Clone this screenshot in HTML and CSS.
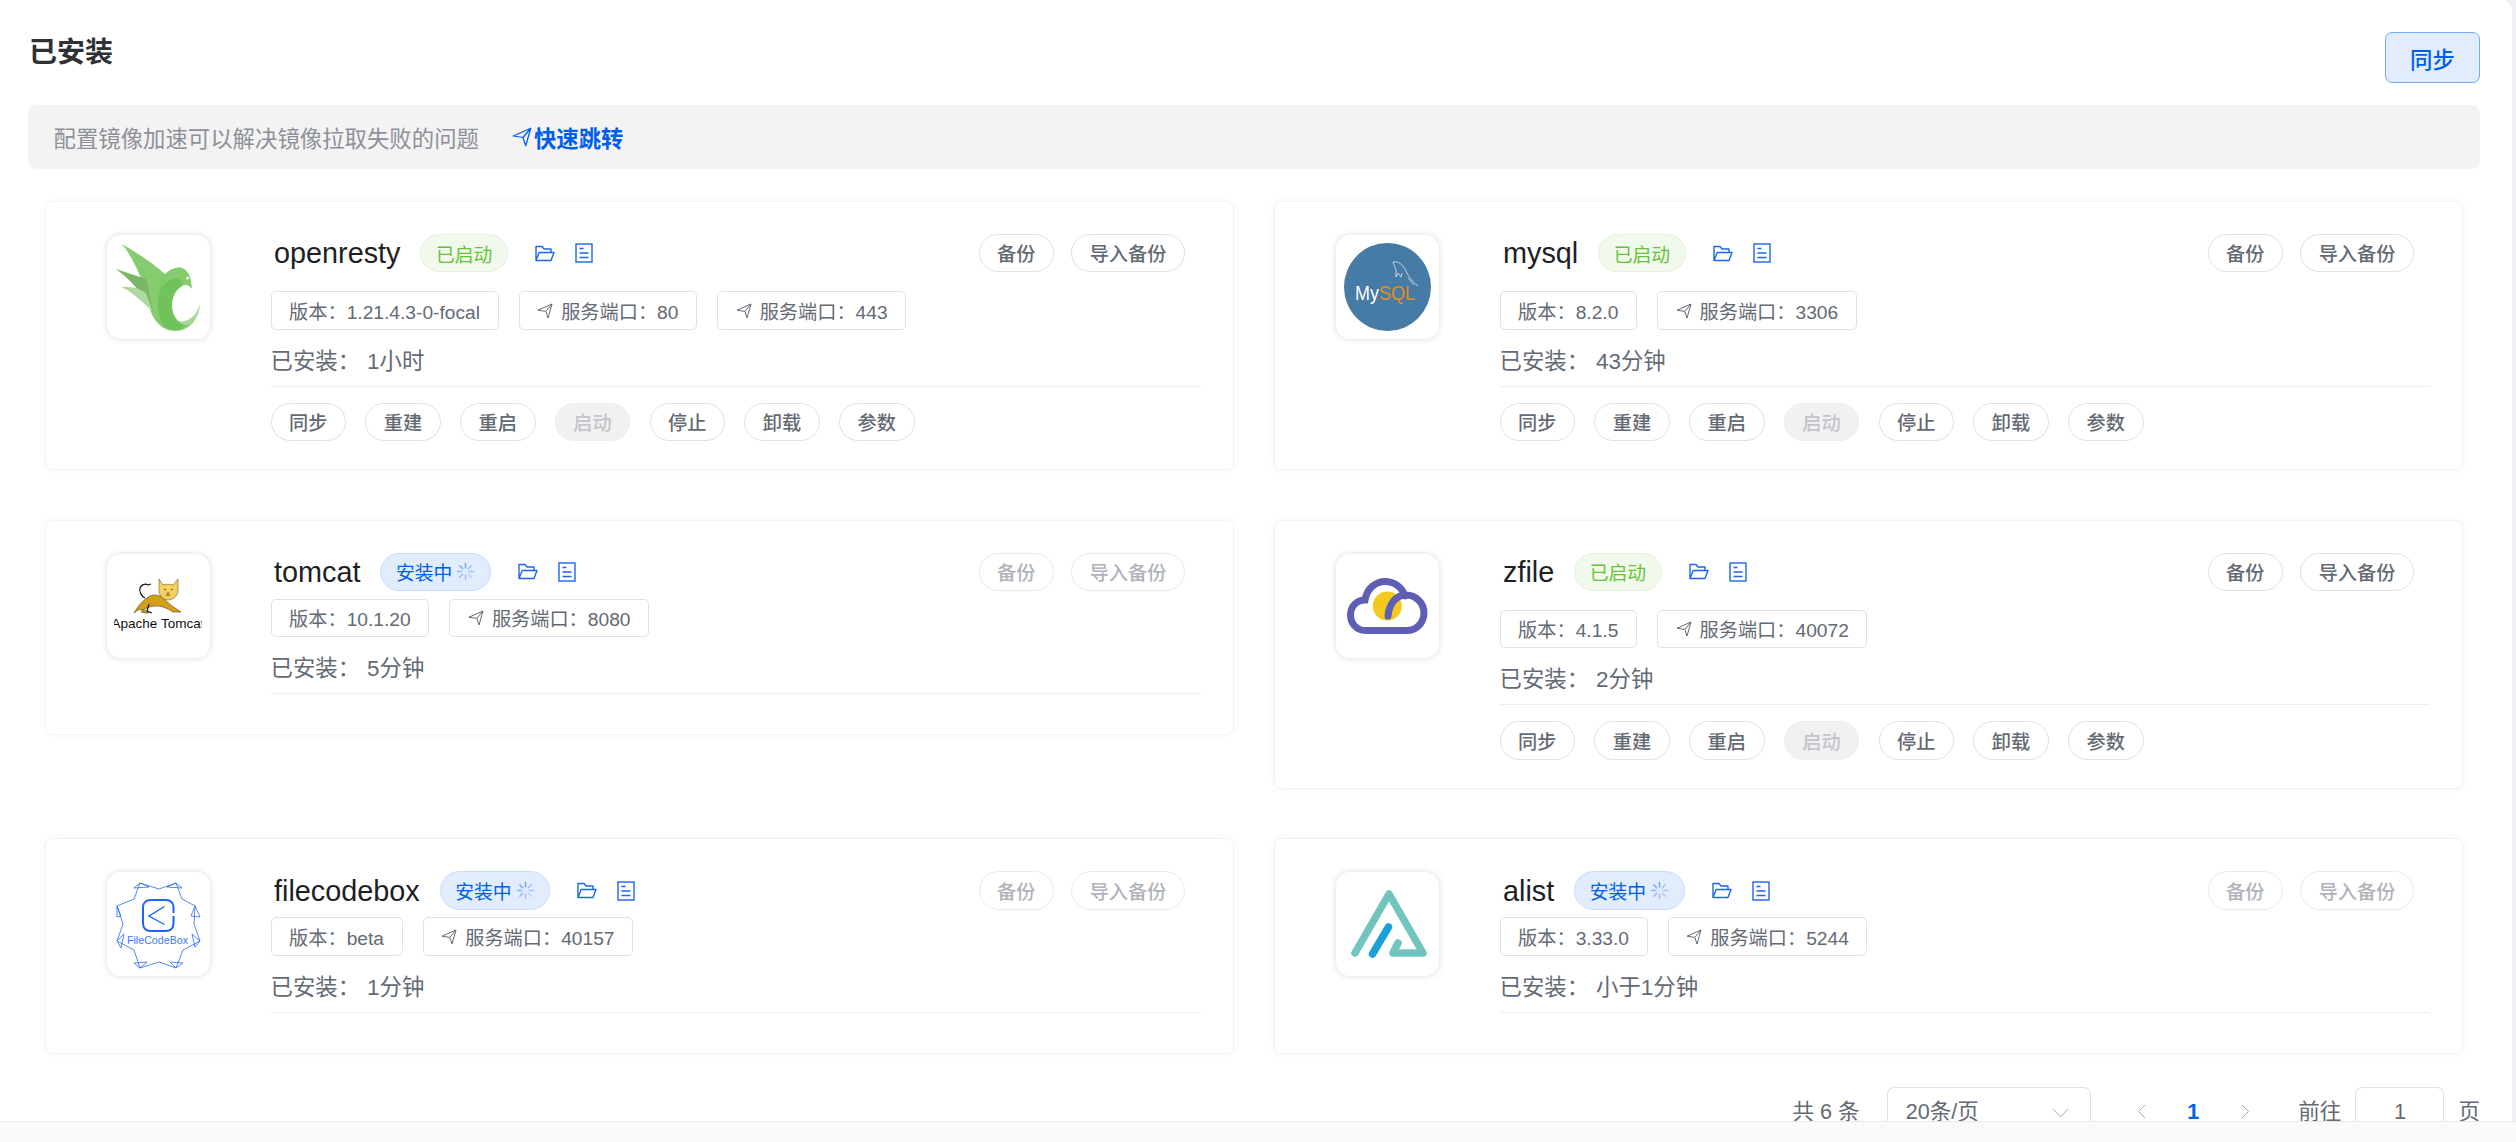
FILE: index.html
```html
<!DOCTYPE html>
<html lang="zh-CN">
<head>
<meta charset="utf-8">
<title>已安装</title>
<link rel="stylesheet" href="styles.css">
</head>
<body>
<svg class="defs" aria-hidden="true">
  <symbol id="i-folder" viewBox="0 0 20 17"><path d="M1 15.5V1.5h6l2 2.500h7v3.500M1 15.5L4.2 7.5H19l-3 8z" fill="none" stroke="currentColor" stroke-width="1.4" stroke-linejoin="round"/></symbol>
  <symbol id="i-doc" viewBox="0 0 18 20"><rect x="1" y="1" width="16" height="18" fill="none" stroke="currentColor" stroke-width="1.4"/><path d="M4.5 5.500h4M4.5 10h9M4.5 14.500h9" fill="none" stroke="currentColor" stroke-width="1.4"/></symbol>
  <symbol id="i-nav" viewBox="0 0 16 16"><path d="M1 7.2L15 1l-4 14-2.2-6.600zM8.800 8.400L15 1" fill="none" stroke="currentColor" stroke-width="1" stroke-linejoin="round"/></symbol>
  <symbol id="i-spin" viewBox="0 0 20 20"><g fill="none" stroke="currentColor" stroke-width="1.5" stroke-linecap="round"><path d="M10 1.5v4.500"/><path d="M10 14v4.500" opacity=".6"/><path d="M1.5 10H6" opacity=".7"/><path d="M14 10h4.500" opacity=".5"/><path d="M4 4l3 3" opacity=".9"/><path d="M16 4l-3 3" opacity=".6"/><path d="M4 16l3-3" opacity=".7"/><path d="M16 16l-3-3" opacity=".4"/></g></symbol>
  <symbol id="i-left" viewBox="0 0 9 15"><path d="M8 1L1.5 7.500 8 14" fill="none" stroke="currentColor" stroke-width="1"/></symbol>
  <symbol id="i-right" viewBox="0 0 9 15"><path d="M1 1l6.500 6.500L1 14" fill="none" stroke="currentColor" stroke-width="1"/></symbol>
  <symbol id="i-down" viewBox="0 0 17 10"><path d="M1 1l7.500 8L16 1" fill="none" stroke="currentColor" stroke-width="1"/></symbol>
</svg>
<div class="app">
  <div class="frame">
    <main class="main">
      <header class="head">
        <h1 class="title">已安装</h1>
        <button class="sync">同步</button>
      </header>
      <div class="alert">
        <span class="alert-text">配置镜像加速可以解决镜像拉取失败的问题</span>
        <a class="alert-link"><svg class="alert-icon"><use href="#i-nav"/></svg>快速跳转</a>
      </div>
      <section class="grid">

        <article class="card">
          <div class="logo">
            <svg class="logo-svg" viewBox="0 0 103 104">
              <path d="M15 9C32 19 48 30 58 39C64 33 72 31 77 34C82 37 84 42 85 54C82 50 79 49 75 51C68 55 64 64 65 73C66 84 74 90 82 89C87 87 91 80 93 70C92 83 83 96 68 96C55 96 46 85 43 74C38 52 30 28 15 9Z" fill="#84cc6d"/>
              <path d="M62 37C52 46 50 62 54 76C58 87 66 96 74 95C60 92 53 82 52 70C51 56 55 45 62 37Z" fill="#72bd5c"/>
              <path d="M75 51C68 55 64 64 65 73C66 84 74 90 80 90C72 96 62 96 56 90C52 84 50 74 51 64C53 50 62 42 72 43C74 45 76 48 75 51Z" fill="#72c25b"/>
              <path d="M9 34L39 44C42 56 44 68 46 78C40 63 25 46 9 34Z" fill="#7bb566"/>
              <path d="M14 52C24 51 32 53 39 58C42 66 44 71 45 76C36 67 25 57 14 52Z" fill="#aedaa2"/>
              <path d="M93 69C92 78 88 86 81 90C76 90 73 88 71 86C80 88 89 82 93 69Z" fill="#a8d89a"/>
              <circle cx="80.500" cy="43" r="1.500" fill="#fff"/>
            </svg>
          </div>
          <div class="body">
            <div class="top">
              <span class="name">openresty</span>
              <span class="status status-ok">已启动</span>
              <svg class="act-folder"><use href="#i-folder"/></svg>
              <svg class="act-doc"><use href="#i-doc"/></svg>
              <div class="backup"><button class="pill">备份</button><button class="pill">导入备份</button></div>
            </div>
            <div class="tags">
              <span class="tag">版本：1.21.4.3-0-focal</span>
              <span class="tag"><svg class="tag-icon"><use href="#i-nav"/></svg>服务端口：80</span>
              <span class="tag"><svg class="tag-icon"><use href="#i-nav"/></svg>服务端口：443</span>
            </div>
            <div class="since">已安装：<span class="since-val">1小时</span></div>
            <div class="rule"></div>
            <div class="actions">
              <button class="pill">同步</button><button class="pill">重建</button><button class="pill">重启</button><button class="pill pill-off">启动</button><button class="pill">停止</button><button class="pill">卸载</button><button class="pill">参数</button>
            </div>
          </div>
        </article>

        <article class="card">
          <div class="logo">
            <svg class="logo-svg" viewBox="0 0 103 104">
              <ellipse cx="51.500" cy="52" rx="43.500" ry="44" fill="#457ba4"/>
              <path d="M57 27C62 26 66 29 69 34C72 40 74 45 82 51M57 27C58 31 60 33 60 36L60 42L62 38L65 42L66 38M72 43L78 50" fill="none" stroke="#dfeaf2" stroke-width=".8"/>
              <text class="t-mysql" x="19" y="65" textLength="60" lengthAdjust="spacingAndGlyphs"><tspan fill="#fff">My</tspan><tspan fill="#e48e1a">SQL</tspan></text>
            </svg>
          </div>
          <div class="body">
            <div class="top">
              <span class="name">mysql</span>
              <span class="status status-ok">已启动</span>
              <svg class="act-folder"><use href="#i-folder"/></svg>
              <svg class="act-doc"><use href="#i-doc"/></svg>
              <div class="backup"><button class="pill">备份</button><button class="pill">导入备份</button></div>
            </div>
            <div class="tags">
              <span class="tag">版本：8.2.0</span>
              <span class="tag"><svg class="tag-icon"><use href="#i-nav"/></svg>服务端口：3306</span>
            </div>
            <div class="since">已安装：<span class="since-val">43分钟</span></div>
            <div class="rule"></div>
            <div class="actions">
              <button class="pill">同步</button><button class="pill">重建</button><button class="pill">重启</button><button class="pill pill-off">启动</button><button class="pill">停止</button><button class="pill">卸载</button><button class="pill">参数</button>
            </div>
          </div>
        </article>

        <article class="card card-busy">
          <div class="logo">
            <svg class="logo-svg" viewBox="0 0 103 104">
              <path d="M27 59C31 52 36 46 43 42C47 40 52 41 56 44C60 48 66 53 74 58L66 58C60 54 54 52 50 52C44 52 38 54 34 58L38 59L42 59C38 56 35 55 31 56Z" fill="#d4a017" stroke="#3a2a05" stroke-width=".5"/>
              <path d="M52 25L56 31C59 30 63 30 66 31L71 25L71 37C71 42 65 46 61 46C57 46 52 42 52 37Z" fill="#f3cf5e" stroke="#5a4308" stroke-width=".5"/>
              <path d="M57 35l2 1M64 36l2-1M61 38v2M59 41h4" stroke="#3a2a05" stroke-width=".8" fill="none"/>
              <path d="M38 44C34 42 32 37 33 34C34 31 38 29 41 31M41 31l3-1" fill="none" stroke="#111" stroke-width="1.200"/>
              <path d="M42 50L40 57L45 59" fill="none" stroke="#111" stroke-width="1.200"/>
              <svg x="7" y="60" width="88" height="20" viewBox="0 0 88 20"><text class="t-tomcat" x="44" y="14" text-anchor="middle">Apache Tomcat</text></svg>
            </svg>
          </div>
          <div class="body">
            <div class="top">
              <span class="name">tomcat</span>
              <span class="status status-busy">安装中<svg class="spin"><use href="#i-spin"/></svg></span>
              <svg class="act-folder"><use href="#i-folder"/></svg>
              <svg class="act-doc"><use href="#i-doc"/></svg>
              <div class="backup"><button class="pill pill-dim">备份</button><button class="pill pill-dim">导入备份</button></div>
            </div>
            <div class="tags">
              <span class="tag">版本：10.1.20</span>
              <span class="tag"><svg class="tag-icon"><use href="#i-nav"/></svg>服务端口：8080</span>
            </div>
            <div class="since">已安装：<span class="since-val">5分钟</span></div>
            <div class="rule"></div>
          </div>
        </article>

        <article class="card">
          <div class="logo">
            <svg class="logo-svg" viewBox="0 0 103 104">
              <circle cx="51.300" cy="52" r="14.500" fill="#f5c81e"/>
              <path d="M30 76.500C20 76.500 14.500 69 14.500 61C14.500 52 21 46 29 46C31 34 40 27.500 49 27.500C58 27.500 66 33 69 42M52 62C53 50 60 41 70 41C80 41 88 49 88 59C88 69 80 76.500 71 76.500H30" fill="none" stroke="#5d5fb5" stroke-width="7" stroke-linecap="round"/>
            </svg>
          </div>
          <div class="body">
            <div class="top">
              <span class="name">zfile</span>
              <span class="status status-ok">已启动</span>
              <svg class="act-folder"><use href="#i-folder"/></svg>
              <svg class="act-doc"><use href="#i-doc"/></svg>
              <div class="backup"><button class="pill">备份</button><button class="pill">导入备份</button></div>
            </div>
            <div class="tags">
              <span class="tag">版本：4.1.5</span>
              <span class="tag"><svg class="tag-icon"><use href="#i-nav"/></svg>服务端口：40072</span>
            </div>
            <div class="since">已安装：<span class="since-val">2分钟</span></div>
            <div class="rule"></div>
            <div class="actions">
              <button class="pill">同步</button><button class="pill">重建</button><button class="pill">重启</button><button class="pill pill-off">启动</button><button class="pill">停止</button><button class="pill">卸载</button><button class="pill">参数</button>
            </div>
          </div>
        </article>

        <article class="card card-busy">
          <div class="logo">
            <svg class="logo-svg" viewBox="0 0 103 104">
              <path d="M33 11L52 17L69 11L75 27L88 34L87 52L93 69L76 78L69 96L52 90L33 96L27 78L10 69L16 52L10 34L27 27Z" fill="none" stroke="#2a6cea" stroke-width=".8" stroke-linejoin="round"/>
              <path d="M33 11L42 15L27 16ZM69 11L60 15L75 16ZM88 34L84 44L93 45ZM10 34L14 44L10 45ZM93 69L85 62L88 75ZM10 69L17 62L14 76ZM69 96L63 90L76 91ZM33 96L40 90L27 91Z" fill="none" stroke="#2a6cea" stroke-width=".8"/>
              <path d="M66.500 41V35.500C66.500 31 63.500 28 59 28H43.500C39 28 36 31 36 35.500V51.500C36 56 39 59 43.500 59H59C63.500 59 66.500 56 66.500 51.500V44" fill="none" stroke="#1b66ee" stroke-width="2"/>
              <path d="M57.500 34.500L42 44L57.500 52.500" fill="none" stroke="#1b66ee" stroke-width="1.400"/>
              <text class="t-fcb" x="20" y="72" textLength="61" lengthAdjust="spacingAndGlyphs">FileCodeBox</text>
            </svg>
          </div>
          <div class="body">
            <div class="top">
              <span class="name">filecodebox</span>
              <span class="status status-busy">安装中<svg class="spin"><use href="#i-spin"/></svg></span>
              <svg class="act-folder"><use href="#i-folder"/></svg>
              <svg class="act-doc"><use href="#i-doc"/></svg>
              <div class="backup"><button class="pill pill-dim">备份</button><button class="pill pill-dim">导入备份</button></div>
            </div>
            <div class="tags">
              <span class="tag">版本：beta</span>
              <span class="tag"><svg class="tag-icon"><use href="#i-nav"/></svg>服务端口：40157</span>
            </div>
            <div class="since">已安装：<span class="since-val">1分钟</span></div>
            <div class="rule"></div>
          </div>
        </article>

        <article class="card card-busy">
          <div class="logo">
            <svg class="logo-svg" viewBox="0 0 103 104">
              <path d="M19 81L53 22L87 81H57L62 71" fill="none" stroke="#70c6be" stroke-width="7.500" stroke-linecap="round" stroke-linejoin="round"/>
              <path d="M52.500 55L36.500 82" fill="none" stroke="#1ba0d8" stroke-width="7.500" stroke-linecap="round"/>
            </svg>
          </div>
          <div class="body">
            <div class="top">
              <span class="name">alist</span>
              <span class="status status-busy">安装中<svg class="spin"><use href="#i-spin"/></svg></span>
              <svg class="act-folder"><use href="#i-folder"/></svg>
              <svg class="act-doc"><use href="#i-doc"/></svg>
              <div class="backup"><button class="pill pill-dim">备份</button><button class="pill pill-dim">导入备份</button></div>
            </div>
            <div class="tags">
              <span class="tag">版本：3.33.0</span>
              <span class="tag"><svg class="tag-icon"><use href="#i-nav"/></svg>服务端口：5244</span>
            </div>
            <div class="since">已安装：<span class="since-val">小于1分钟</span></div>
            <div class="rule"></div>
          </div>
        </article>

      </section>
      <nav class="pager">
        <span class="pg-text">共 6 条</span>
        <div class="pg-select"><span>20条/页</span><svg class="pg-down"><use href="#i-down"/></svg></div>
        <span class="pg-btn pg-prev"><svg class="pg-arrow"><use href="#i-left"/></svg></span>
        <span class="pg-btn pg-cur">1</span>
        <span class="pg-btn"><svg class="pg-arrow"><use href="#i-right"/></svg></span>
        <span class="pg-text pg-goto">前往</span>
        <div class="pg-input">1</div>
        <span class="pg-text">页</span>
      </nav>
    </main>
  </div>
  <div class="bar"></div>
</div>
</body>
</html>
```

FILE: styles.css
```css
* { box-sizing: border-box; }

html, body { margin: 0; height: 100%; }

body {
  font-family: "Liberation Sans", "Noto Sans CJK SC", sans-serif;
  color: #646a73;
  overflow: hidden;
}

button { font-family: inherit; }

.defs { width: 0; height: 0; display: block; overflow: hidden; }

.app { height: 1142px; display: flex; flex-direction: column; }

.frame { flex: 1; min-height: 0; background: #eef0f5; padding-right: 4px; }

.main {
  height: 100%;
  overflow: hidden;
  background: #fff;
  border-radius: 0 10px 0 0;
  padding: 32px 32px 0 28px;
}

.bar { height: 21px; flex: none; background: #fafafa; border-top: 1px solid #e5e7ef; }

.head { display: flex; justify-content: space-between; align-items: flex-start; height: 51px; }

.title {
  margin: 0 0 0 1px;
  font-size: 28px;
  line-height: 41px;
  font-weight: 600;
  color: #303133;
}

.sync {
  width: 95px;
  height: 51px;
  background: #e1ecfd;
  border: 1px solid #7aa9f5;
  border-radius: 7px;
  color: #005eeb;
  font-size: 22.4px;
  font-weight: 500;
  padding: 0;
}

.alert {
  margin-top: 22px;
  height: 64px;
  background: #f3f3f3;
  border-radius: 8px;
  padding-left: 25.5px;
  display: flex;
  align-items: center;
  font-size: 22.4px;
}

.alert-text { color: #8e9099; }

.alert-link { margin-left: 33px; display: flex; align-items: center; color: #005eeb; font-weight: 600; }

.alert-icon { width: 20px; height: 20px; margin-right: 2px; color: #005eeb; }

.grid {
  margin-top: 32px;
  padding: 0 17px 0 17px;
  display: grid;
  grid-template-columns: 1189px 1189px;
  column-gap: 40px;
  row-gap: 49.5px;
  align-items: start;
}

.card {
  display: flex;
  background: #fff;
  border: 1px solid #f1f2f7;
  border-radius: 7px;
  box-shadow: 0 0 9px rgba(30, 40, 110, 0.04);
  padding: 32px 32px 28px 60.5px;
}

.card-busy { padding-bottom: 40px; }

.logo {
  flex: none;
  width: 103px;
  height: 104px;
  margin-top: 1px;
  margin-right: 61px;
  border-radius: 14px;
  background: #fff;
  box-shadow: 0 0 6px rgba(0, 0, 0, 0.15);
}

.logo-svg { display: block; width: 103px; height: 104px; }

.t-mysql { font-family: "Liberation Sans", sans-serif; font-size: 20px; }

.t-tomcat { font-family: "Liberation Sans", sans-serif; font-size: 13.5px; fill: #111; }

.t-fcb { font-family: "Liberation Sans", sans-serif; font-size: 11px; fill: #3a7af0; }

.body { flex: 1; min-width: 0; }

.top { display: flex; align-items: center; height: 38.4px; }

.name {
  margin-left: 3.5px;
  font-size: 28.8px;
  line-height: 38px;
  color: #1d1f24;
}

.status {
  margin-left: 20px;
  height: 38.4px;
  border-radius: 20px;
  border: 1px solid;
  padding: 0 14.6px;
  font-size: 18.8px;
  display: flex;
  align-items: center;
}

.status-ok { background: #f0f9eb; border-color: #e1f3d8; color: #67c23a; }

.status-busy { background: #e1ecfd; border-color: #c9dcf9; color: #005eeb; }

.spin { width: 19px; height: 19px; margin-left: 4px; color: #6ea0f0; }

.act-folder { width: 20px; height: 17px; margin-left: 27px; color: #1b66ee; }

.act-doc { width: 18px; height: 20px; margin-left: 20px; color: #1b66ee; }

.backup { margin-left: auto; padding-right: 16px; display: flex; gap: 17px; }

.pill {
  height: 38.4px;
  padding: 0 17.6px;
  background: #fff;
  border: 1px solid #dfe0ea;
  border-radius: 20px;
  color: #646a73;
  font-size: 19.2px;
  font-weight: 500;
  white-space: nowrap;
}

.pill-dim { color: #b0b3ba; border-color: #e9eaf0; }

.pill-off { background: #f1f1f2; color: #c3c5ca; border-color: #eceded; }

.tags { margin-top: 19px; display: flex; gap: 20px; }

.card-busy .tags { margin-top: 7.6px; }

.tag {
  height: 38.4px;
  padding: 0 17.6px;
  border: 1px solid #dfe0ea;
  border-radius: 5px;
  font-size: 19.2px;
  display: flex;
  align-items: center;
  white-space: nowrap;
}

.tag-icon { width: 16px; height: 16px; margin-right: 8px; color: #646a73; }

.since { margin-top: 16px; font-size: 22.4px; line-height: 32px; }

.since-val { margin-left: 7px; }

.rule { margin-top: 8px; height: 1px; background: #ecedf3; }

.actions { margin-top: 16px; display: flex; gap: 19.2px; }

.pager {
  margin-top: 33px;
  display: flex;
  justify-content: flex-end;
  align-items: flex-start;
  height: 36px;
  font-size: 21.6px;
  line-height: 22px;
}

.pg-text { white-space: pre; padding-top: 14.5px; }

.pg-select {
  margin-left: 27px;
  width: 204px;
  height: 36px;
  border: 1px solid #dfe0ea;
  border-bottom: 0;
  border-radius: 7px 7px 0 0;
  padding: 13.5px 21px 0 18px;
  display: flex;
  align-items: flex-start;
  justify-content: space-between;
}

.pg-down { width: 17px; height: 10px; margin-top: 7px; color: #a8abb2; }

.pg-btn {
  width: 52px;
  height: 36px;
  padding-top: 14.5px;
  display: flex;
  align-items: flex-start;
  justify-content: center;
}

.pg-prev { margin-left: 24.5px; }

.pg-arrow { width: 9px; height: 15px; margin-top: 3px; color: #a8abb2; }

.pg-cur { color: #005eeb; font-weight: 700; }

.pg-goto { margin-left: 27px; }

.pg-input {
  margin: 0 14px;
  width: 89px;
  height: 36px;
  border: 1px solid #dfe0ea;
  border-bottom: 0;
  border-radius: 7px 7px 0 0;
  padding-top: 13.5px;
  text-align: center;
}
```
